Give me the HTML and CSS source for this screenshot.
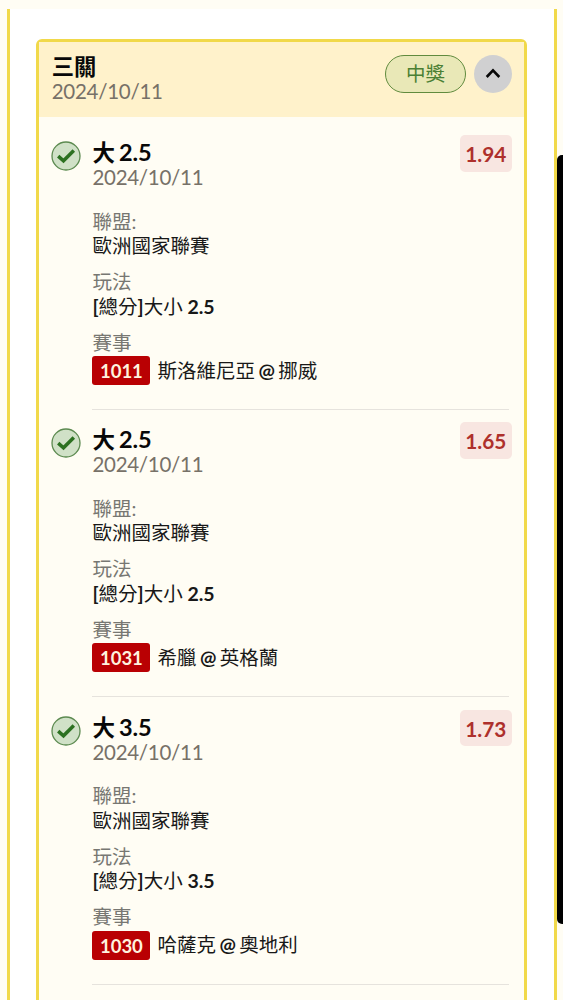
FILE: index.html
```html
<!DOCTYPE html>
<html lang="zh-Hant">
<head>
<meta charset="utf-8">
<title>三關</title>
<link rel="stylesheet" href="styles.css">
</head>
<body>
<main class="panel">
  <section class="card">
    <header class="card-head">
      <div>
        <h1 class="name">三關</h1>
        <div class="date">2024/10/11</div>
      </div>
      <div class="actions">
        <span class="status">中獎</span>
        <button class="toggle" aria-label="收合"><svg width="38" height="38" viewBox="0 0 38 38"><path d="M12.7 22 19 15.3 25.3 22" fill="none" stroke="#080808" stroke-width="2.6"/></svg></button>
      </div>
    </header>
    <article class="leg">
      <svg class="check" viewBox="0 0 30 30"><circle cx="15" cy="15" r="14" fill="#d0e1c7" stroke="#5c8a50" stroke-width="1.3"/><path d="M7.2 15.1 12.5 19.8 22.8 9.6" fill="none" stroke="#2c7121" stroke-width="3.5"/></svg>
      <div class="info">
        <h2 class="pick">大<span class="line">2.5</span></h2>
        <div class="date">2024/10/11</div>
        <dl class="facts">
          <div><dt>聯盟:</dt><dd>歐洲國家聯賽</dd></div>
          <div><dt>玩法</dt><dd><b>[</b>總分<b>]</b>大小<b> 2.5</b></dd></div>
          <div><dt>賽事</dt><dd class="match"><span class="code">1011</span><span>斯洛維尼亞<b class="at">@</b>挪威</span></dd></div>
        </dl>
      </div>
      <span class="odds">1.94</span>
    </article>
    <article class="leg">
      <svg class="check" viewBox="0 0 30 30"><circle cx="15" cy="15" r="14" fill="#d0e1c7" stroke="#5c8a50" stroke-width="1.3"/><path d="M7.2 15.1 12.5 19.8 22.8 9.6" fill="none" stroke="#2c7121" stroke-width="3.5"/></svg>
      <div class="info">
        <h2 class="pick">大<span class="line">2.5</span></h2>
        <div class="date">2024/10/11</div>
        <dl class="facts">
          <div><dt>聯盟:</dt><dd>歐洲國家聯賽</dd></div>
          <div><dt>玩法</dt><dd><b>[</b>總分<b>]</b>大小<b> 2.5</b></dd></div>
          <div><dt>賽事</dt><dd class="match"><span class="code">1031</span><span>希臘<b class="at">@</b>英格蘭</span></dd></div>
        </dl>
      </div>
      <span class="odds">1.65</span>
    </article>
    <article class="leg">
      <svg class="check" viewBox="0 0 30 30"><circle cx="15" cy="15" r="14" fill="#d0e1c7" stroke="#5c8a50" stroke-width="1.3"/><path d="M7.2 15.1 12.5 19.8 22.8 9.6" fill="none" stroke="#2c7121" stroke-width="3.5"/></svg>
      <div class="info">
        <h2 class="pick">大<span class="line">3.5</span></h2>
        <div class="date">2024/10/11</div>
        <dl class="facts">
          <div><dt>聯盟:</dt><dd>歐洲國家聯賽</dd></div>
          <div><dt>玩法</dt><dd><b>[</b>總分<b>]</b>大小<b> 3.5</b></dd></div>
          <div><dt>賽事</dt><dd class="match"><span class="code">1030</span><span>哈薩克<b class="at">@</b>奧地利</span></dd></div>
        </dl>
      </div>
      <span class="odds">1.73</span>
    </article>
  </section>
</main>
<div class="drawer"></div>
</body>
</html>
```
FILE: styles.css
```css
* { box-sizing: border-box; margin: 0; padding: 0; }
html, body { height: 1000px; overflow: hidden; }
body {
  padding: 8.5px 6px 0 6.5px;
  background: #fffdf4;
  color: #181818;
  font: 19.5px/24px Lato, "Noto Sans CJK TC", sans-serif;
}
.panel {
  height: 991.5px;
  padding: 30.5px 27px 0 26.5px;
  background: #fff;
  border: solid #f1d94a;
  border-width: 0 3px;
}
.card {
  height: 980px;
  background: #fffdf4;
  border: 3px solid #f1d94a;
  border-radius: 6px;
}
.card-head {
  display: flex;
  justify-content: space-between;
  height: 75px;
  padding: 11.5px 12px 0 12.7px;
  background: #fff2cb;
}
.name { font-size: 22.3px; line-height: 25px; color: #080808; }
.date { font-size: 20.5px; line-height: 24.5px; letter-spacing: -0.27px; color: #777168; }
.actions { display: flex; gap: 8px; padding-top: 1.5px; }
.status {
  width: 81px;
  height: 38px;
  border: 1.5px solid #618b3e;
  border-radius: 19px;
  background: #e9e8b7;
  color: #4b8034;
  line-height: 36px;
  text-align: center;
}
.toggle {
  width: 38px;
  height: 38px;
  border: 0;
  border-radius: 50%;
  background: #d0d0d1;
}
.toggle svg { display: block; }
.leg {
  display: flex;
  align-items: flex-start;
  height: 287.4px;
  padding: 18px 12px 0;
}
.leg:first-of-type { padding-top: 23px; height: 292.4px; }
.check { width: 30px; height: 30px; margin-top: 1px; flex: none; }
.info {
  flex: 1;
  height: 270px;
  margin: 0 -49px 0 11.4px;
  border-bottom: 1.5px solid #e6e3dd;
}
.pick { font-size: 22.5px; line-height: 25px; color: #080808; }
.line { margin-left: 4px; font-size: 23.5px; line-height: 24px; }
.facts { display: grid; gap: 12px; margin-top: 20px; }
dt { height: 24.5px; color: #777772; }
b { font-weight: 700; }
.at { margin: 0 3.5px; }
.match { display: flex; align-items: center; gap: 7px; height: 29px; margin-top: 1px; }
.code {
  width: 58px;
  height: 29px;
  border-radius: 3px;
  background: #b90003;
  color: #fff2df;
  font-size: 18.5px;
  font-weight: 700;
  line-height: 30px;
  text-align: center;
}
.odds {
  position: relative;
  width: 52.5px;
  height: 36.5px;
  margin-top: -5px;
  border-radius: 5px;
  background: #f8e6e1;
  color: #ae302c;
  font-size: 20.8px;
  font-weight: 700;
  line-height: 38px;
  text-align: center;
}
.drawer {
  position: absolute;
  top: 155px;
  right: 0;
  width: 6px;
  height: 769px;
  border-radius: 5px 0 0 5px;
  background: #000;
}
```
